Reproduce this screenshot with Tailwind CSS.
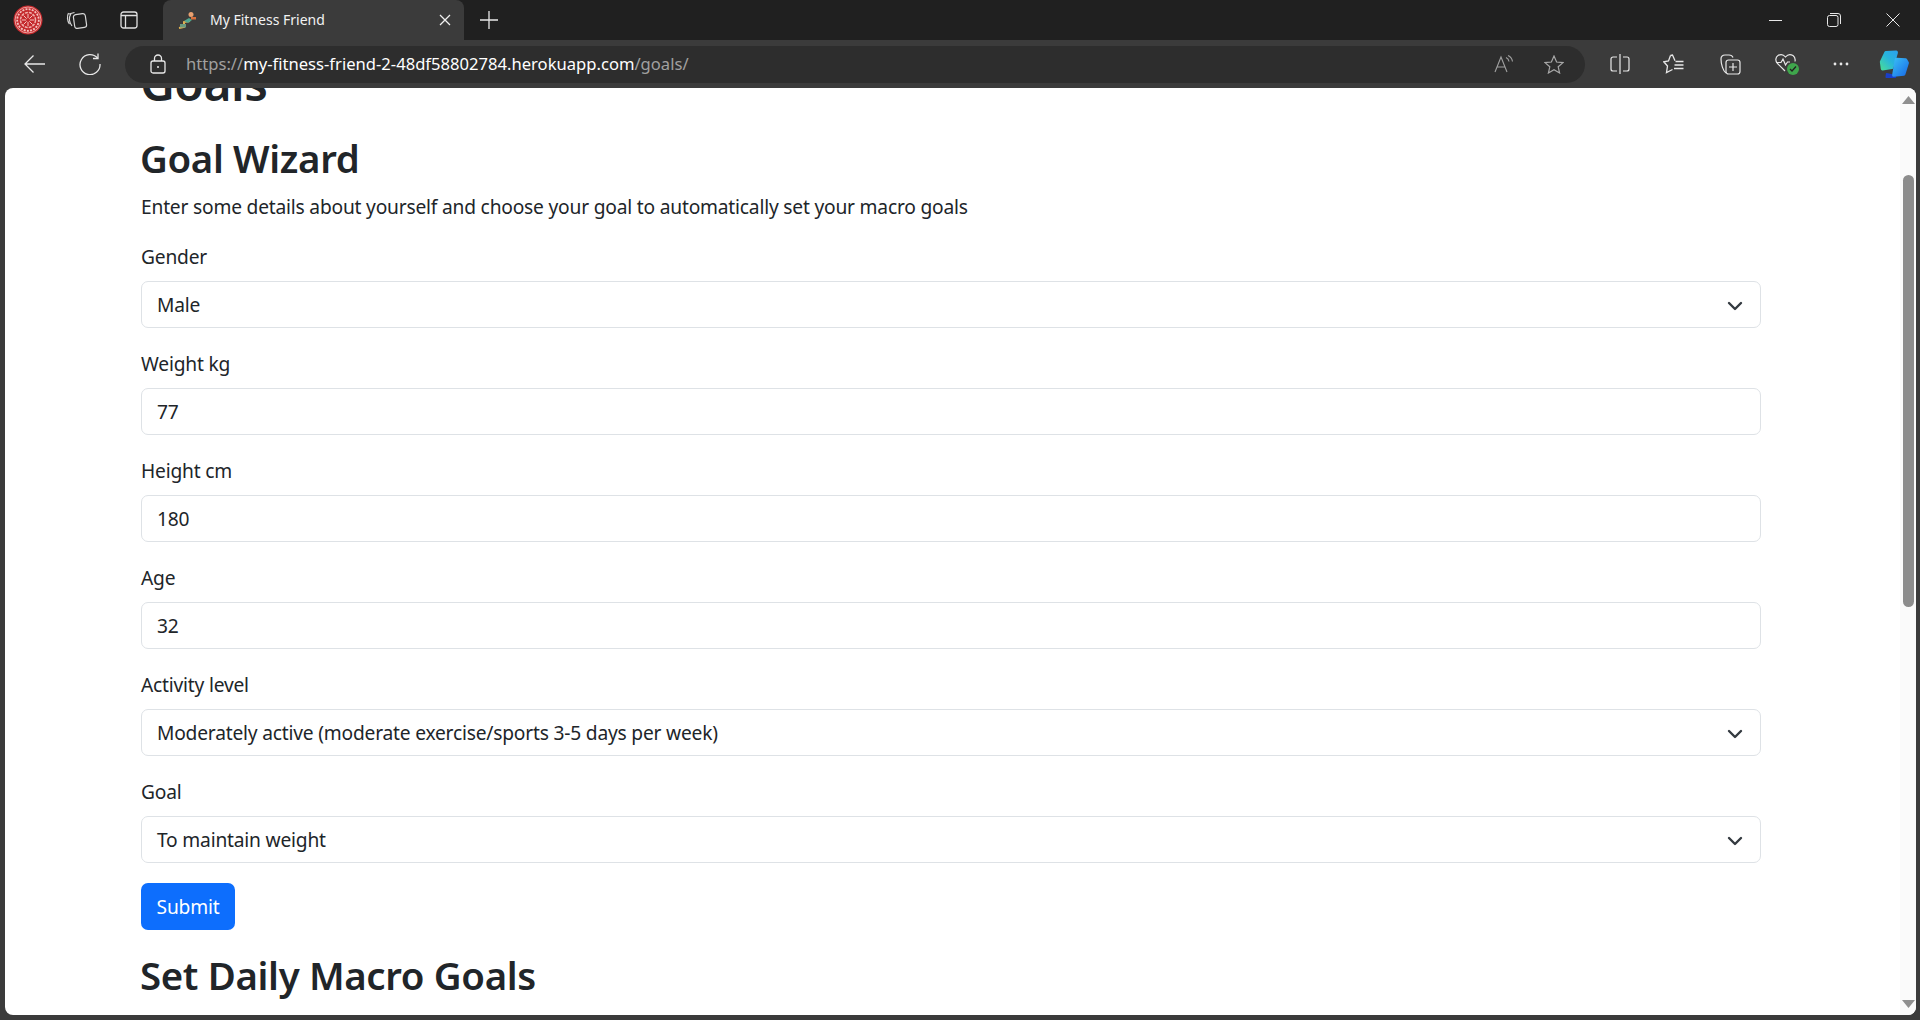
<!DOCTYPE html>
<html><head><meta charset="utf-8"><title>My Fitness Friend</title>
<script src="https://cdn.jsdelivr.net/npm/@tailwindcss/browser@4"></script></head>
<body class="m-0 h-[1020px] w-[1920px] overflow-hidden bg-[#3b3b3b] font-['Noto_Sans',sans-serif]">
<div class="flex h-10 items-end bg-[#202020]">
  <div class="flex h-10 w-[163px] items-center pl-[13px]">
    <svg width="30" height="30" viewBox="0 0 30 30"><circle cx="15" cy="15" r="14.500" fill="#c4282c"/><circle cx="15" cy="15" r="13" fill="none" stroke="#f0b0ac" stroke-width=".9"/><circle cx="15" cy="15" r="10.800" fill="none" stroke="#f4c4c0" stroke-width="1.800" stroke-dasharray="2 1.200"/><circle cx="15" cy="15" r="7.500" fill="none" stroke="#f0b0ac" stroke-width="1.500" stroke-dasharray="3 1"/><path d="M9 15H21M15 9V21M10.500 10.500L19.500 19.500M19.500 10.500L10.500 19.500" stroke="#f4c4c0" stroke-width="1"/><circle cx="15" cy="15" r="2" fill="#c4282c"/></svg>
    <svg class="ml-[23px]" width="22" height="22" viewBox="0 0 22 22" fill="none" stroke="#d8d8d8" stroke-width="1.200"><rect x="8" y="5" width="12" height="14" rx="2.500" transform="rotate(-8 14 12)"/><path d="M6 17C3 13 3 8 5 4.500M8.500 3.500L3 5"/><path d="M3.500 15C1 12 1 7 2.500 4"/></svg>
    <svg class="ml-[32px]" width="18" height="18" viewBox="0 0 18 18" fill="none" stroke="#e0e0e0" stroke-width="1.300"><rect x="1" y="1" width="16" height="16" rx="2.500"/><path d="M1 4.500H17M5.500 4.500V17" /></svg>
  </div>
  <div class="flex h-10 w-[301px] items-center rounded-t-lg bg-[#3b3b3b] pl-[14px] pr-[13px]">
    <svg width="20" height="18" viewBox="0 0 20 18"><path d="M2 17l5-1 0-5 6-1" fill="none" stroke="#e0b050" stroke-width="2"/><rect x="3" y="13" width="6" height="3.500" fill="#6a9a80"/><path d="M7 10L12 7l3 2-4 3z" fill="#4fa58e"/><circle cx="14" cy="3.500" r="2.500" fill="#e8a070"/><rect x="14" y="6" width="5" height="2.500" fill="#d8703c"/></svg>
    <span class="ml-[13px] flex-1 text-[14px] leading-none text-[#f2f2f2]">My Fitness Friend</span>
    <svg width="12" height="12" viewBox="0 0 12 12" stroke="#f0f0f0" stroke-width="1.300"><path d="M1 1L11 11M11 1L1 11"/></svg>
  </div>
  <div class="flex h-10 w-[50px] items-center justify-center"><svg width="18" height="18" viewBox="0 0 18 18" stroke="#e8e8e8" stroke-width="1.300"><path d="M9 0V18M0 9H18"/></svg></div>
  <div class="flex-1"></div>
  <div class="flex h-10 items-center gap-[44px] pr-[20px]">
    <svg width="13" height="13" viewBox="0 0 13 13" stroke="#e8e8e8" stroke-width="1"><path d="M0 6.500H13"/></svg>
    <svg class="ml-[1px]" width="14" height="14" viewBox="0 0 14 14" fill="none" stroke="#e8e8e8" stroke-width="1"><rect x="0.500" y="2.500" width="10.500" height="11" rx="2"/><path d="M3 .500H11a2.500 2.500 0 0 1 2.500 2.500V11"/></svg>
    <svg class="ml-[1px]" width="14" height="14" viewBox="0 0 14 14" stroke="#e8e8e8" stroke-width="1"><path d="M.500 .500L13.500 13.500M13.500 .500L.500 13.500"/></svg>
  </div>
</div>
<div class="flex h-[48px] items-center">
  <div class="flex w-[125px] items-center pl-[24px]">
    <svg width="22" height="20" viewBox="0 0 22 20" fill="none" stroke="#e8e8e8" stroke-width="1.300"><path d="M21 10H1M9.500 1.500L1 10l8.500 8.500"/></svg>
    <svg class="ml-[33px]" width="22" height="22" viewBox="0 0 22 22" fill="none" stroke="#e8e8e8" stroke-width="1.300"><path d="M18.500 5A10 10 0 1 0 21 11"/><path d="M19 .500V5.500H14"/></svg>
  </div>
  <div class="flex h-[37px] w-[1460px] items-center rounded-[19px] bg-[#2d2d2d]">
    <svg class="ml-[25px]" width="16" height="20" viewBox="0 0 16 20" fill="none" stroke="#e8e8e8" stroke-width="1.300"><rect x="1" y="7" width="14" height="12" rx="2"/><path d="M4.500 7V4.500a3.500 3.500 0 0 1 7 0V7"/><circle cx="8" cy="13" r="1" fill="#e8e8e8" stroke="none"/></svg>
    <span class="ml-[20px] flex-1 text-[16.600px] leading-none text-[#a0a0a0]">https://<span class="text-white">my-fitness-friend-2-48df58802784.herokuapp.com</span>/goals/</span>
    <svg width="20" height="18" viewBox="0 0 20 18" fill="none" stroke="#a0a0a0" stroke-width="1.100"><path d="M1 17L7 2l6 15M3.200 12H11"/><path d="M12 2.500a5 5 0 0 1 3 4M14 .5a8 8 0 0 1 4.500 6"/></svg>
    <svg class="ml-[30px] mr-[21px]" width="20" height="19" viewBox="0 0 20 19" fill="none" stroke="#a8a8a8" stroke-width="1.200"><path d="M10 1l2.600 6 6.400.6-4.800 4.200 1.400 6.200L10 14.800 4.400 18l1.400-6.200L1 7.600 7.400 7z"/></svg>
  </div>
  <div class="flex flex-1 items-center pl-[25px]">
    <svg width="20" height="20" viewBox="0 0 20 20" fill="none" stroke="#e8e8e8" stroke-width="1.200"><path d="M7 3H3a2 2 0 0 0-2 2v10a2 2 0 0 0 2 2h4M13 3h4a2 2 0 0 1 2 2v10a2 2 0 0 1-2 2h-4M10 0V20"/></svg>
    <svg class="ml-[33px]" width="21" height="20" viewBox="0 0 21 20" fill="none" stroke="#e8e8e8" stroke-width="1.300"><path d="M7.500 1.500L5.500 7 .8 7.800 4.500 12 3.500 18.500 9.500 15.500M7.500 1.500L9.500 1 12 6.800"/><path d="M12.500 7.500H20.500M11.500 11H20.500M11 14.500H20.500"/></svg>
    <svg class="ml-[36px]" width="21" height="21" viewBox="0 0 21 21" fill="none" stroke="#e8e8e8" stroke-width="1.200"><path d="M6 19C3 17 1 10 1 5c0-2.500 1.500-4 4-4h4c2 0 3.500 1 4 2.500"/><rect x="6" y="6" width="14" height="14" rx="2.500"/><path d="M13 9v8M9 13h8"/></svg>
    <div class="relative ml-[34px] h-[22px] w-[24px]">
      <svg width="21" height="20" viewBox="0 0 21 20" fill="none" stroke="#e8e8e8" stroke-width="1.200"><path d="M10 18L2.500 10.500C0 8 .5 4 3 2.500 5.500 1 8.500 1.500 10.500 4 12.500 1.500 15.500 1 18 2.500 20 4 20.500 6 20 8.500"/><path d="M1 9.500H6L8 6l2.500 6L12.500 9H15"/></svg>
      <span class="absolute right-0 bottom-0 flex h-[12px] w-[12px] items-center justify-center rounded-full bg-[#3fa64c]"><svg width="8" height="8" viewBox="0 0 8 8" fill="none" stroke="#202020" stroke-width="1.300"><path d="M1 4l2 2 4-4.500"/></svg></span>
    </div>
    <svg class="ml-[34px]" width="16" height="4" viewBox="0 0 16 4" fill="#e8e8e8"><circle cx="2" cy="2" r="1.400"/><circle cx="8" cy="2" r="1.400"/><circle cx="14" cy="2" r="1.400"/></svg>
    <svg class="ml-[30px]" width="31" height="28" viewBox="0 0 36 28" preserveAspectRatio="none"><defs><linearGradient id="c1" x1="0" y1="1" x2="1" y2="0"><stop offset="0" stop-color="#45d8a0"/><stop offset=".55" stop-color="#28b4dc"/><stop offset="1" stop-color="#2aa4ec"/></linearGradient><linearGradient id="c2" x1="0" y1="0" x2="1" y2="1"><stop offset="0" stop-color="#38b8f4"/><stop offset="1" stop-color="#1a70e8"/></linearGradient></defs><path d="M9 24L14 25 19 27 13 27.500 8.500 27z" fill="#1a3fc8" stroke="#1a3fc8" stroke-width="2" stroke-linejoin="round"/><path d="M8 3L20 2.500 15 17 4 18.500 3 12z" fill="url(#c1)" stroke="url(#c1)" stroke-width="4" stroke-linejoin="round"/><path d="M20 9.500L31 10 33 13 29 24 17 25z" fill="url(#c2)" stroke="url(#c2)" stroke-width="3.500" stroke-linejoin="round"/></svg>
  </div>
</div>
<div class="mx-[5px] flex h-[927px] w-[1911px] overflow-hidden rounded-lg bg-white text-[#212529] [font-size:19.2px] tracking-[-0.2px]">
  <main class="h-full w-[1895px] overflow-hidden pl-[136px] pr-[139px]">
    <h1 class="m-0 ml-[-1px] mt-[-34px] text-[48px] leading-[58px] font-semibold tracking-[-0.5px]">Goals</h1>
    <h2 class="m-0 ml-[-1px] mt-[23px] text-[38.4px] leading-[46px] font-semibold tracking-[-0.35px]">Goal Wizard</h2>
    <p class="m-0 mt-[11px] leading-[29px]">Enter some details about yourself and choose your goal to automatically set your macro goals</p>
    <form class="mt-[21px] flex flex-col gap-[21px]">
      <div><label class="mb-[10px] block leading-[29px]">Gender</label>
        <div class="flex h-[47px] items-center justify-between rounded-[7px] border border-[#dee2e6] pl-[15px] pr-[17px] pt-[2px]">Male<svg width="16" height="10" viewBox="0 0 16 10" fill="none" stroke="#343a40" stroke-width="2.400" stroke-linecap="round" stroke-linejoin="round"><path d="M2 2l6 6 6-6"/></svg></div></div>
      <div><label class="mb-[10px] block leading-[29px]">Weight kg</label>
        <div class="flex h-[47px] items-center rounded-[7px] border border-[#dee2e6] pl-[15px] pt-[2px]">77</div></div>
      <div><label class="mb-[10px] block leading-[29px]">Height cm</label>
        <div class="flex h-[47px] items-center rounded-[7px] border border-[#dee2e6] pl-[15px] pt-[2px]">180</div></div>
      <div><label class="mb-[10px] block leading-[29px]">Age</label>
        <div class="flex h-[47px] items-center rounded-[7px] border border-[#dee2e6] pl-[15px] pt-[2px]">32</div></div>
      <div><label class="mb-[10px] block leading-[29px]">Activity level</label>
        <div class="flex h-[47px] items-center justify-between rounded-[7px] border border-[#dee2e6] pl-[15px] pr-[17px] pt-[2px]">Moderately active (moderate exercise/sports 3-5 days per week)<svg width="16" height="10" viewBox="0 0 16 10" fill="none" stroke="#343a40" stroke-width="2.400" stroke-linecap="round" stroke-linejoin="round"><path d="M2 2l6 6 6-6"/></svg></div></div>
      <div><label class="mb-[10px] block leading-[29px]">Goal</label>
        <div class="flex h-[47px] items-center justify-between rounded-[7px] border border-[#dee2e6] pl-[15px] pr-[17px] pt-[2px]">To maintain weight<svg width="16" height="10" viewBox="0 0 16 10" fill="none" stroke="#343a40" stroke-width="2.400" stroke-linecap="round" stroke-linejoin="round"><path d="M2 2l6 6 6-6"/></svg></div></div>
    </form>
    <button class="mt-[20px] flex h-[47px] w-[94px] items-center justify-center rounded-[7px] bg-[#0d6efd] pt-[2px] text-white">Submit</button>
    <h2 class="m-0 ml-[-1px] mt-[22px] text-[38.4px] leading-[46px] font-semibold tracking-[-0.35px]">Set Daily Macro Goals</h2>
  </main>
  <div class="flex h-full w-[16px] flex-col items-center bg-[#fafafa] pt-[7px]">
    <svg width="13" height="10" viewBox="0 0 13 10" fill="#8f8f8f"><path d="M6.500 1L13 9H0z"/></svg>
    <div class="mt-[70px] h-[432px] w-[11px] rounded-full bg-[#8c8c8c]"></div>
    <div class="flex-1"></div>
    <svg class="mb-[6px]" width="13" height="10" viewBox="0 0 13 10" fill="#8f8f8f"><path d="M6.500 9L13 1H0z"/></svg>
  </div>
</div>
</body></html>
